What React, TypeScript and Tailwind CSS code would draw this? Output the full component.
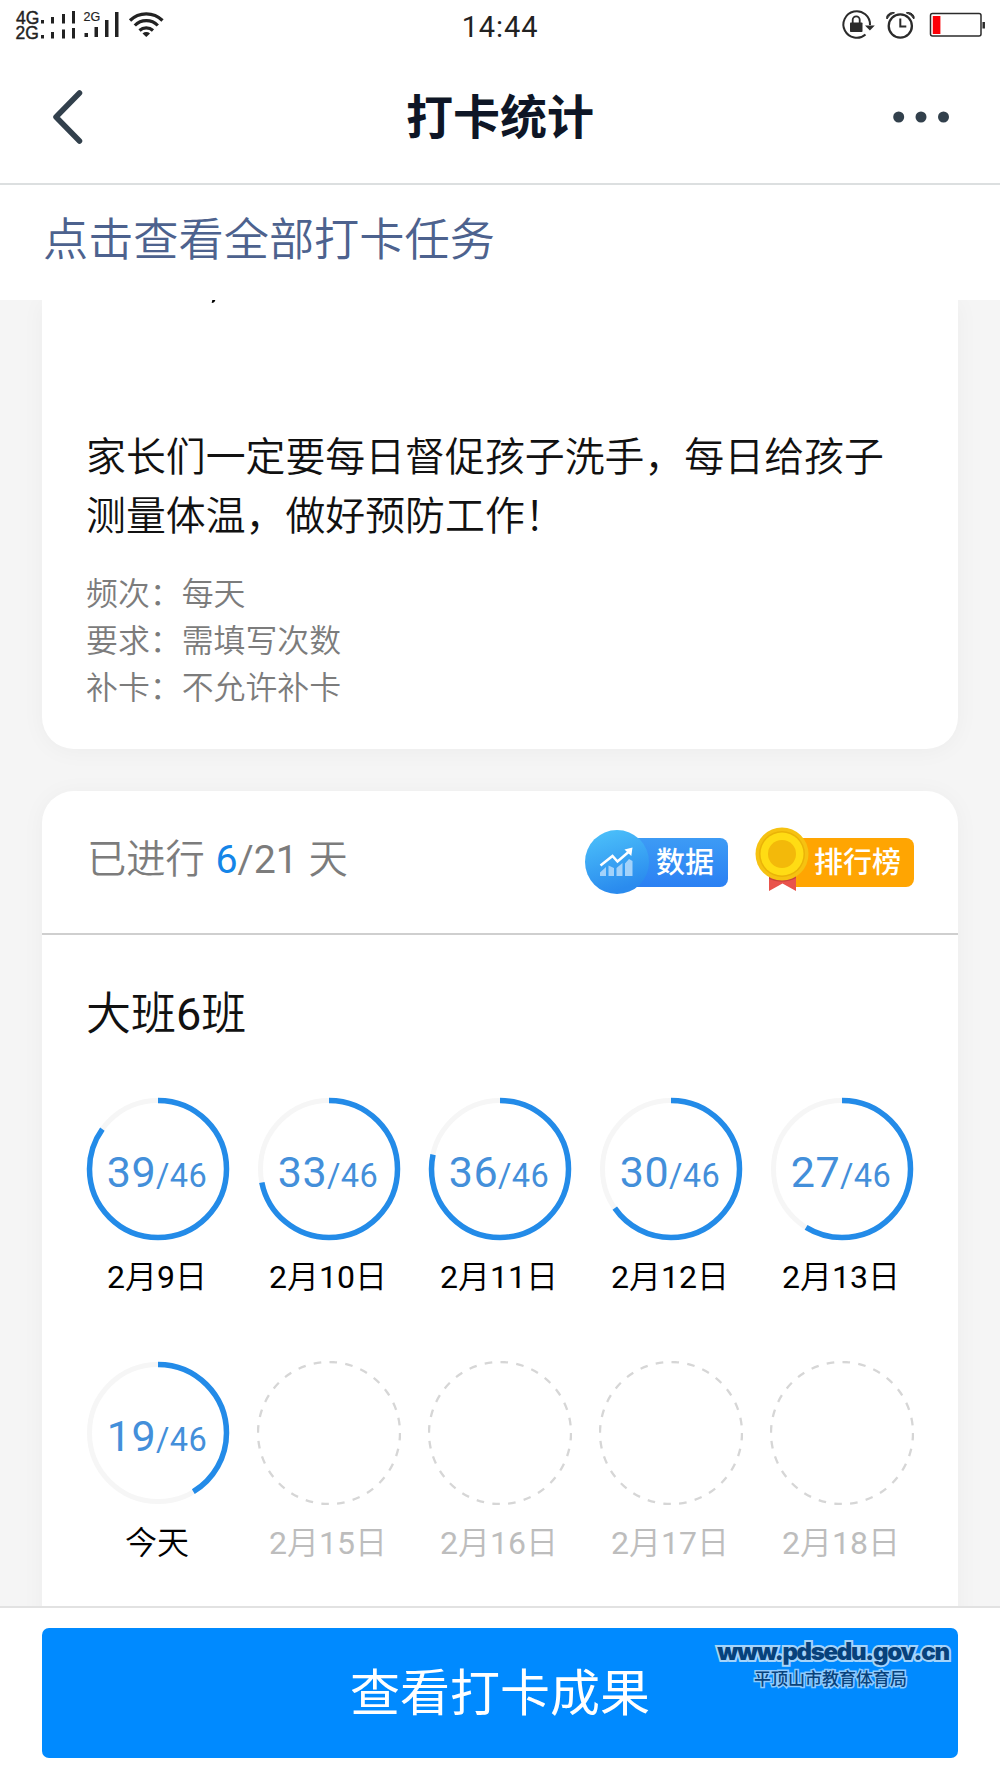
import type { ReactNode } from 'react';

interface Day {
  label: string;
  count?: number;
}

const TOTAL = 46;

const days: Day[] = [
  { label: '2月9日', count: 39 },
  { label: '2月10日', count: 33 },
  { label: '2月11日', count: 36 },
  { label: '2月12日', count: 30 },
  { label: '2月13日', count: 27 },
  { label: '今天', count: 19 },
  { label: '2月15日' },
  { label: '2月16日' },
  { label: '2月17日' },
  { label: '2月18日' },
];

const meta = [
  { name: '频次', value: '每天' },
  { name: '要求', value: '需填写次数' },
  { name: '补卡', value: '不允许补卡' },
];

// Digits keep the regular weight next to the lighter Chinese glyphs
function MixedText({ text }: { text: string }) {
  return (
    <>
      {text.split(/(\d+)/).map((part, i) =>
        /\d/.test(part) ? (
          <span key={i} className="font-normal">
            {part}
          </span>
        ) : (
          part
        ),
      )}
    </>
  );
}

function SignalIcons() {
  return (
    <svg width="180" height="50" viewBox="0 0 180 50" fill="#222">
      <g fontFamily="Liberation Sans, sans-serif">
        <text fontSize="17.500" stroke="#222" strokeWidth="0.4">
          <tspan x="16" y="23.5">4G</tspan>
          <tspan x="15.5" y="38.5">2G</tspan>
        </text>
        <text x="83.5" y="21" fontSize="12.5" stroke="#222" strokeWidth="0.2">2G</text>
      </g>
      <rect x="41" y="20" width="3" height="3.5" />
      <rect x="51" y="17" width="3" height="6.5" />
      <rect x="62" y="14" width="3" height="9.5" />
      <rect x="72" y="11" width="3" height="12.5" />
      <rect x="41" y="35" width="3" height="3.5" />
      <rect x="51" y="32" width="3" height="6.5" />
      <rect x="62" y="29.5" width="3" height="9" />
      <rect x="72" y="28" width="3" height="10.5" />
      <rect x="84.5" y="33" width="3.5" height="4" />
      <rect x="94.5" y="27" width="3.5" height="10" />
      <rect x="105" y="20" width="3.5" height="17" />
      <rect x="115" y="12" width="3.5" height="25" />
      <g fill="none" stroke="#222" strokeWidth="3.200">
        <path d="M130 20.500a23 23 0 0 1 32.500 0" />
        <path d="M134.800 25.500a16 16 0 0 1 23 0" />
        <path d="M139.500 30.500a10 10 0 0 1 13.500 0" />
      </g>
      <path d="M142.500 33.500a5.500 5.500 0 0 1 7.500 0l-3.700 3.500z" />
    </svg>
  );
}

function SystemIcons() {
  return (
    <svg width="180" height="50" viewBox="0 0 180 50" fill="none" stroke="#2b2b2b">
      {/* rotation lock */}
      <path d="M45.500 34.500A13.300 13.300 0 1 1 50 25" strokeWidth="2" />
      <path d="M45 25.500h9.800l-4.900 5z" fill="#2b2b2b" stroke="none" />
      <rect x="30" y="22.500" width="12.500" height="9.500" rx="0.800" fill="#2b2b2b" stroke="none" />
      <path d="M32.700 23v-3.200a3.500 3.500 0 0 1 7 0V23" strokeWidth="1.800" />
      {/* alarm */}
      <circle cx="80.300" cy="26" r="11.600" strokeWidth="2.300" />
      <path d="M80.300 18.500v8h6" strokeWidth="2" />
      <path
        d="M67 19a11 11 0 0 1 7.500-6.200c-2-.9-4.500 0-6 1.300s-2.500 3.200-1.500 4.900zM93.800 19a11 11 0 0 0-7.500-6.200c2-.9 4.500 0 6 1.300s2.500 3.200 1.500 4.900z"
        fill="#2b2b2b"
        strokeWidth="1"
      />
      {/* battery */}
      <rect x="110.500" y="13.500" width="50.500" height="22.500" rx="2" strokeWidth="1.500" />
      <rect x="112.800" y="16" width="7.600" height="18" fill="#fb0007" stroke="none" />
      <path d="M163.700 22v6.500" strokeWidth="2.500" />
    </svg>
  );
}

function StatusBar() {
  return (
    <div className="flex h-[50px] items-center justify-between">
      <SignalIcons />
      <span className="mt-[4px] font-['Roboto',sans-serif] text-[29px] leading-none tracking-[0.9px] text-[#222]">
        14:44
      </span>
      <SystemIcons />
    </div>
  );
}

function Header() {
  return (
    <header className="flex h-[135px] items-center justify-between border-b-2 border-[#dcdfe0] pr-[51px] pl-[50px]">
      <svg width="56" height="60" viewBox="0 0 56 60" fill="none" stroke="#32404c" strokeWidth="5.500" strokeLinecap="round" strokeLinejoin="round">
        <path d="M29.500 6 6 30l23.500 24" />
      </svg>
      <h1 className="pt-[2px] pl-px text-[47px] leading-none font-bold text-[#0e1626]">打卡统计</h1>
      <svg width="56" height="12" viewBox="0 0 56 12" fill="#32404c">
        <circle cx="5.700" cy="6" r="5.500" />
        <circle cx="28" cy="6" r="5.500" />
        <circle cx="50.500" cy="6" r="5.500" />
      </svg>
    </header>
  );
}

function DataIcon() {
  return (
    <svg className="relative z-10 shrink-0" width="64" height="64" viewBox="0 0 64 64">
      <defs>
        <linearGradient id="data-disc" x1="0" y1="0" x2="0.300" y2="1">
          <stop offset="0" stopColor="#4ec4fb" />
          <stop offset="1" stopColor="#2a8bee" />
        </linearGradient>
      </defs>
      <circle cx="32" cy="32" r="32" fill="url(#data-disc)" />
      <path d="M15 46v-3.500l6-5.500V46zM23.500 46V35.500L29 38v8zM31.500 46V38l6-5v13zM40 46V33.500l4-4.500 3.500 2V46z" fill="#a3d2fa" />
      <path d="M15.500 35.500 27.500 26l5 5.500 11-9.500" fill="none" stroke="#fff" strokeWidth="2.500" />
      <path d="m39.500 19.500 8-2-1.200 8.500z" fill="#fff" />
    </svg>
  );
}

function MedalIcon() {
  return (
    <svg className="relative z-10 mb-[4px] shrink-0" width="54" height="66" viewBox="0 0 54 66">
      <path d="M14 46h27v18l-13.500-7.500L14 64z" fill="#e9534c" />
      <path d="M14 52q13.500 6 27-1v-5H14z" fill="#c9413c" />
      <circle cx="27" cy="27" r="26.500" fill="#f6c211" />
      <circle cx="27" cy="27" r="23" fill="#eab308" />
      <circle cx="27" cy="27" r="21.500" fill="#ffdc14" />
      <circle cx="27" cy="27" r="14" fill="#f3b90a" />
    </svg>
  );
}

function Badge({ icon, label, className }: { icon: ReactNode; label: string; className: string }) {
  return (
    <button className="flex h-[66px] items-center">
      {icon}
      <span
        className={`flex h-[49px] items-center rounded-r-[8px] pt-[2px] text-[29px] leading-none font-medium text-white ${className}`}
      >
        {label}
      </span>
    </button>
  );
}

function DayRing({ day }: { day: Day }) {
  const r = 68.5;
  const length = 2 * Math.PI * r;
  const active = day.count !== undefined;

  return (
    <div className="flex h-[264px] flex-col items-center">
      <div className="relative size-[144px]">
        <svg width="144" height="144" viewBox="0 0 144 144" fill="none">
          {active ? (
            <>
              <circle cx="72" cy="72" r={r} stroke="#f6f6f6" strokeWidth="5" />
              <circle
                cx="72"
                cy="72"
                r={r}
                stroke="#238be8"
                strokeWidth="5.500"
                strokeDasharray={`${(length * (day.count ?? 0)) / TOTAL} ${length}`}
                transform="rotate(-90 72 72)"
              />
            </>
          ) : (
            <circle cx="72" cy="72" r="71" stroke="#d6d6d6" strokeWidth="2.300" strokeDasharray="7.600 8.330" />
          )}
        </svg>
        {active && (
          <div className="absolute inset-0 flex items-baseline justify-center pt-[50px] pr-[2px] font-['Roboto',sans-serif] leading-none tracking-[0.4px] text-[#438fda]">
            <span className="text-[43px] leading-[50px]">{day.count}</span>
            <span className="text-[32.500px] leading-[50px]">/{TOTAL}</span>
          </div>
        )}
      </div>
      <span
        className={`pr-[2px] text-[32px] leading-[44px] font-[350] ${active ? 'text-black' : 'text-[#bdbdbd]'} ${day.label === '今天' || !active ? 'mt-[16px]' : 'mt-[14px]'}`}
      >
        <MixedText text={day.label} />
      </span>
    </div>
  );
}

export default function App() {
  return (
    <div className="flex h-[1778px] w-[1000px] flex-col overflow-hidden bg-[#f5f5f5] font-['Roboto','Noto_Sans_CJK_SC',sans-serif]">
      <div className="relative z-10 h-[300px] shrink-0 bg-white">
        <StatusBar />
        <Header />
        <a className="block pt-[28px] pl-[43px] text-[45.200px] leading-[56px] font-[350] text-[#4d628e]">
          点击查看全部打卡任务
        </a>
      </div>

      <main className="flex min-h-0 flex-1 flex-col gap-[42px] overflow-hidden px-[42px]">
        {/* Task description */}
        <section className="h-[449px] shrink-0 rounded-b-[32px] bg-white px-[44px] shadow-[0_2px_24px_rgba(0,0,0,0.04)]">
          {/* tail of the line scrolled under the header */}
          <div className="flex h-[129px] items-start pl-[126px]">
            <span className="h-[3px] w-[3px] -skew-x-12 rounded-br-full bg-black" />
          </div>
          <p className="text-[39.900px] leading-[58.500px] font-[350] whitespace-nowrap text-[#111]">
            家长们一定要每日督促孩子洗手，每日给孩子
            <br />
            测量体温，做好预防工作！
          </p>
          <dl className="mt-[25px] text-[31.900px] leading-[47px] font-[350] text-[#7c7c7c]">
            {meta.map((m) => (
              <div key={m.name} className="flex">
                <dt>{m.name}：</dt>
                <dd>{m.value}</dd>
              </div>
            ))}
          </dl>
        </section>

        {/* Progress */}
        <section className="h-[900px] shrink-0 rounded-t-[32px] bg-white shadow-[0_2px_24px_rgba(0,0,0,0.04)]">
          <div className="flex h-[144px] items-center border-b-2 border-[#cfcfcf] pr-[44px] pl-[45px]">
            <p className="flex-1 pb-[2px] text-[39.300px] leading-none font-[350] text-[#7c7c7c] [word-spacing:1px]">
              已进行 <span className="font-normal text-[#1485e8]">6</span>
              <span className="font-normal">/21</span> 天
            </p>
            <div className="flex gap-[27px]">
              <Badge
                icon={<DataIcon />}
                label="数据"
                className="-ml-[24px] bg-linear-to-b from-[#3d9bf5] to-[#2b80f3] pr-[14px] pl-[31px]"
              />
              <Badge icon={<MedalIcon />} label="排行榜" className="-ml-[20px] bg-[#ffa502] pr-[13px] pl-[25px]" />
            </div>
          </div>
          <h2 className="pt-[52px] pl-[44px] text-[45px] leading-[56px] font-[350] text-[#111]">
            <MixedText text="大班6班" />
          </h2>
          <div className="mt-[54px] grid grid-cols-[repeat(5,171px)] justify-center">
            {days.map((day) => (
              <DayRing key={day.label} day={day} />
            ))}
          </div>
        </section>
      </main>

      <footer className="relative z-10 h-[172px] shrink-0 border-t-2 border-[#e2e2e2] bg-white px-[42px] pt-[20px]">
        <button className="h-[130px] w-full rounded-[7px] bg-[#008aff] pt-[2px] text-[50px] leading-none text-white">
          查看打卡成果
        </button>
        <div className="absolute top-[29px] right-[51px] flex w-[232px] flex-col items-center text-[#07427c]">
          <span className="font-['Inter','Open_Sans',sans-serif] text-[24px] leading-[30px] font-black tracking-[-1.300px] whitespace-nowrap [-webkit-text-stroke:4px_#a5d4fa] [paint-order:stroke_fill]">
            www.pdsedu.gov.cn
          </span>
          <span className="pr-[5px] text-[17px] leading-[24px] font-medium whitespace-nowrap [-webkit-text-stroke:3px_#8ecbff] [paint-order:stroke_fill]">
            平顶山市教育体育局
          </span>
        </div>
      </footer>
    </div>
  );
}
